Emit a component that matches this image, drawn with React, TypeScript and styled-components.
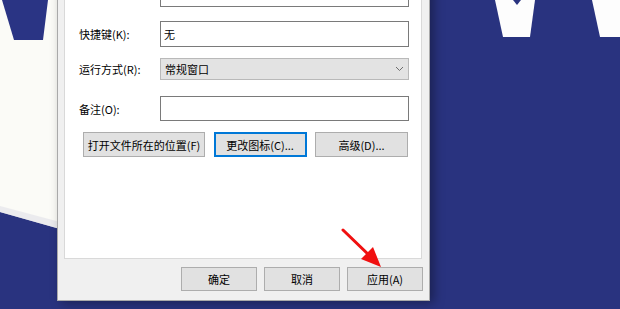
import styled, { createGlobalStyle, css } from "styled-components";

const GlobalStyle = createGlobalStyle`
  html, body {
    margin: 0;
    padding: 0;
  }
  body {
    font-family: "Noto Sans CJK SC", "Microsoft YaHei", sans-serif;
    font-size: 11px;
    color: #000;
  }
`;

function Wallpaper() {
  return (
    <Backdrop viewBox="0 0 620 309" width="620" height="309">
      <rect width="620" height="309" fill="#29337f" />
      <polygon points="0,0 60,0 60,229 0,212" fill="#fbfbf7" />
      <polygon points="0,206 60,222 60,229 0,212" fill="#e4e4ea" opacity="0.7" />
      <polygon points="2,0 48,0 43,40 14,40" fill="#2a3484" />
      <polygon points="495,0 535,0 530,37 503,37" fill="#fdfdfd" />
      <polygon points="513,0 521,0 517,5" fill="#29337f" />
      <polygon points="592,0 620,0 620,37 600,37" fill="#fdfdfd" />
    </Backdrop>
  );
}

function Chevron() {
  return (
    <svg width="9" height="6" viewBox="0 0 9 6">
      <path d="M1 1 L4.5 4.5 L8 1" fill="none" stroke="#6d6d6d" strokeWidth="1" />
    </svg>
  );
}

function Arrow() {
  return (
    <ArrowSvg viewBox="0 0 620 309" width="620" height="309">
      <line x1="343" y1="230" x2="370" y2="256" stroke="#f01010" strokeWidth="3" strokeLinecap="round" />
      <polygon points="381,267 361,259 373,247" fill="#f01010" />
    </ArrowSvg>
  );
}

function App() {
  return (
    <>
      <GlobalStyle />
      <Desktop>
        <Wallpaper />
        <Dialog>
          <Panel>
            <Row $height={24}>
              <Label />
              <TextBox />
            </Row>
            <Row $height={26} $gap={14}>
              <Label>快捷键(K):</Label>
              <TextBox>无</TextBox>
            </Row>
            <Row $height={22} $gap={11}>
              <Label>运行方式(R):</Label>
              <Select>
                <span>常规窗口</span>
                <Chevron />
              </Select>
            </Row>
            <Row $height={25} $gap={16}>
              <Label>备注(O):</Label>
              <TextBox />
            </Row>
            <ButtonRow>
              <Button $width={122}>打开文件所在的位置(F)</Button>
              <Button $width={93} $focused>
                更改图标(C)...
              </Button>
              <Button $width={93}>高级(D)...</Button>
            </ButtonRow>
          </Panel>
          <Footer>
            <Button $width={76}>确定</Button>
            <Button $width={76}>取消</Button>
            <Button $width={76}>应用(A)</Button>
          </Footer>
        </Dialog>
        <Arrow />
      </Desktop>
    </>
  );
}

const Desktop = styled.div`
  position: relative;
  width: 620px;
  height: 309px;
  overflow: hidden;
  background: #29337f;
`;

const Backdrop = styled.svg`
  position: absolute;
  left: 0;
  top: 0;
`;

const ArrowSvg = styled.svg`
  position: absolute;
  left: 0;
  top: 0;
  pointer-events: none;
`;

const Dialog = styled.div`
  position: absolute;
  left: 57px;
  top: -24px;
  width: 358px;
  height: 314px;
  display: flex;
  flex-direction: column;
  background: #f0f0f0;
  border: 1px solid #a9a9a9;
  padding: 0 7px 9px 6px;
  box-shadow: 4px 2px 10px rgba(0, 0, 0, 0.35);
`;

const Panel = styled.div`
  flex: 1;
  display: flex;
  flex-direction: column;
  background: #fff;
  border: 1px solid #d9d9d9;
  padding: 5px 0 0 14px;
`;

const Row = styled.div<{ $height: number; $gap?: number }>`
  display: flex;
  align-items: center;
  height: ${(p) => p.$height}px;
  margin-top: ${(p) => p.$gap ?? 0}px;
`;

const Label = styled.div`
  width: 81px;
  flex-shrink: 0;
  white-space: nowrap;
`;

const TextBox = styled.div`
  box-sizing: border-box;
  width: 249px;
  height: 100%;
  border: 1px solid #7a7a7a;
  background: #fff;
  padding: 0 3px;
  display: flex;
  align-items: center;
`;

const Select = styled.div`
  box-sizing: border-box;
  width: 249px;
  height: 100%;
  border: 1px solid #b9b9b9;
  background: #e3e3e3;
  padding: 0 4px;
  display: flex;
  align-items: center;
  justify-content: space-between;
`;

const ButtonRow = styled.div`
  display: flex;
  gap: 8.5px;
  margin-top: 11px;
  padding-left: 4px;
`;

const Button = styled.div<{ $width: number; $focused?: boolean }>`
  box-sizing: border-box;
  width: ${(p) => p.$width}px;
  height: 25px;
  display: flex;
  align-items: center;
  justify-content: center;
  background: #e1e1e1;
  border: 1px solid #adadad;
  white-space: nowrap;
  ${(p) =>
    p.$focused &&
    css`
      border: 2px solid #0078d7;
    `}
`;

const Footer = styled.div`
  display: flex;
  justify-content: flex-end;
  gap: 7px;
  margin: 8px -1px 0 0;
  height: 24px;

  ${Button} {
    height: 24px;
  }
`;

export default App;
